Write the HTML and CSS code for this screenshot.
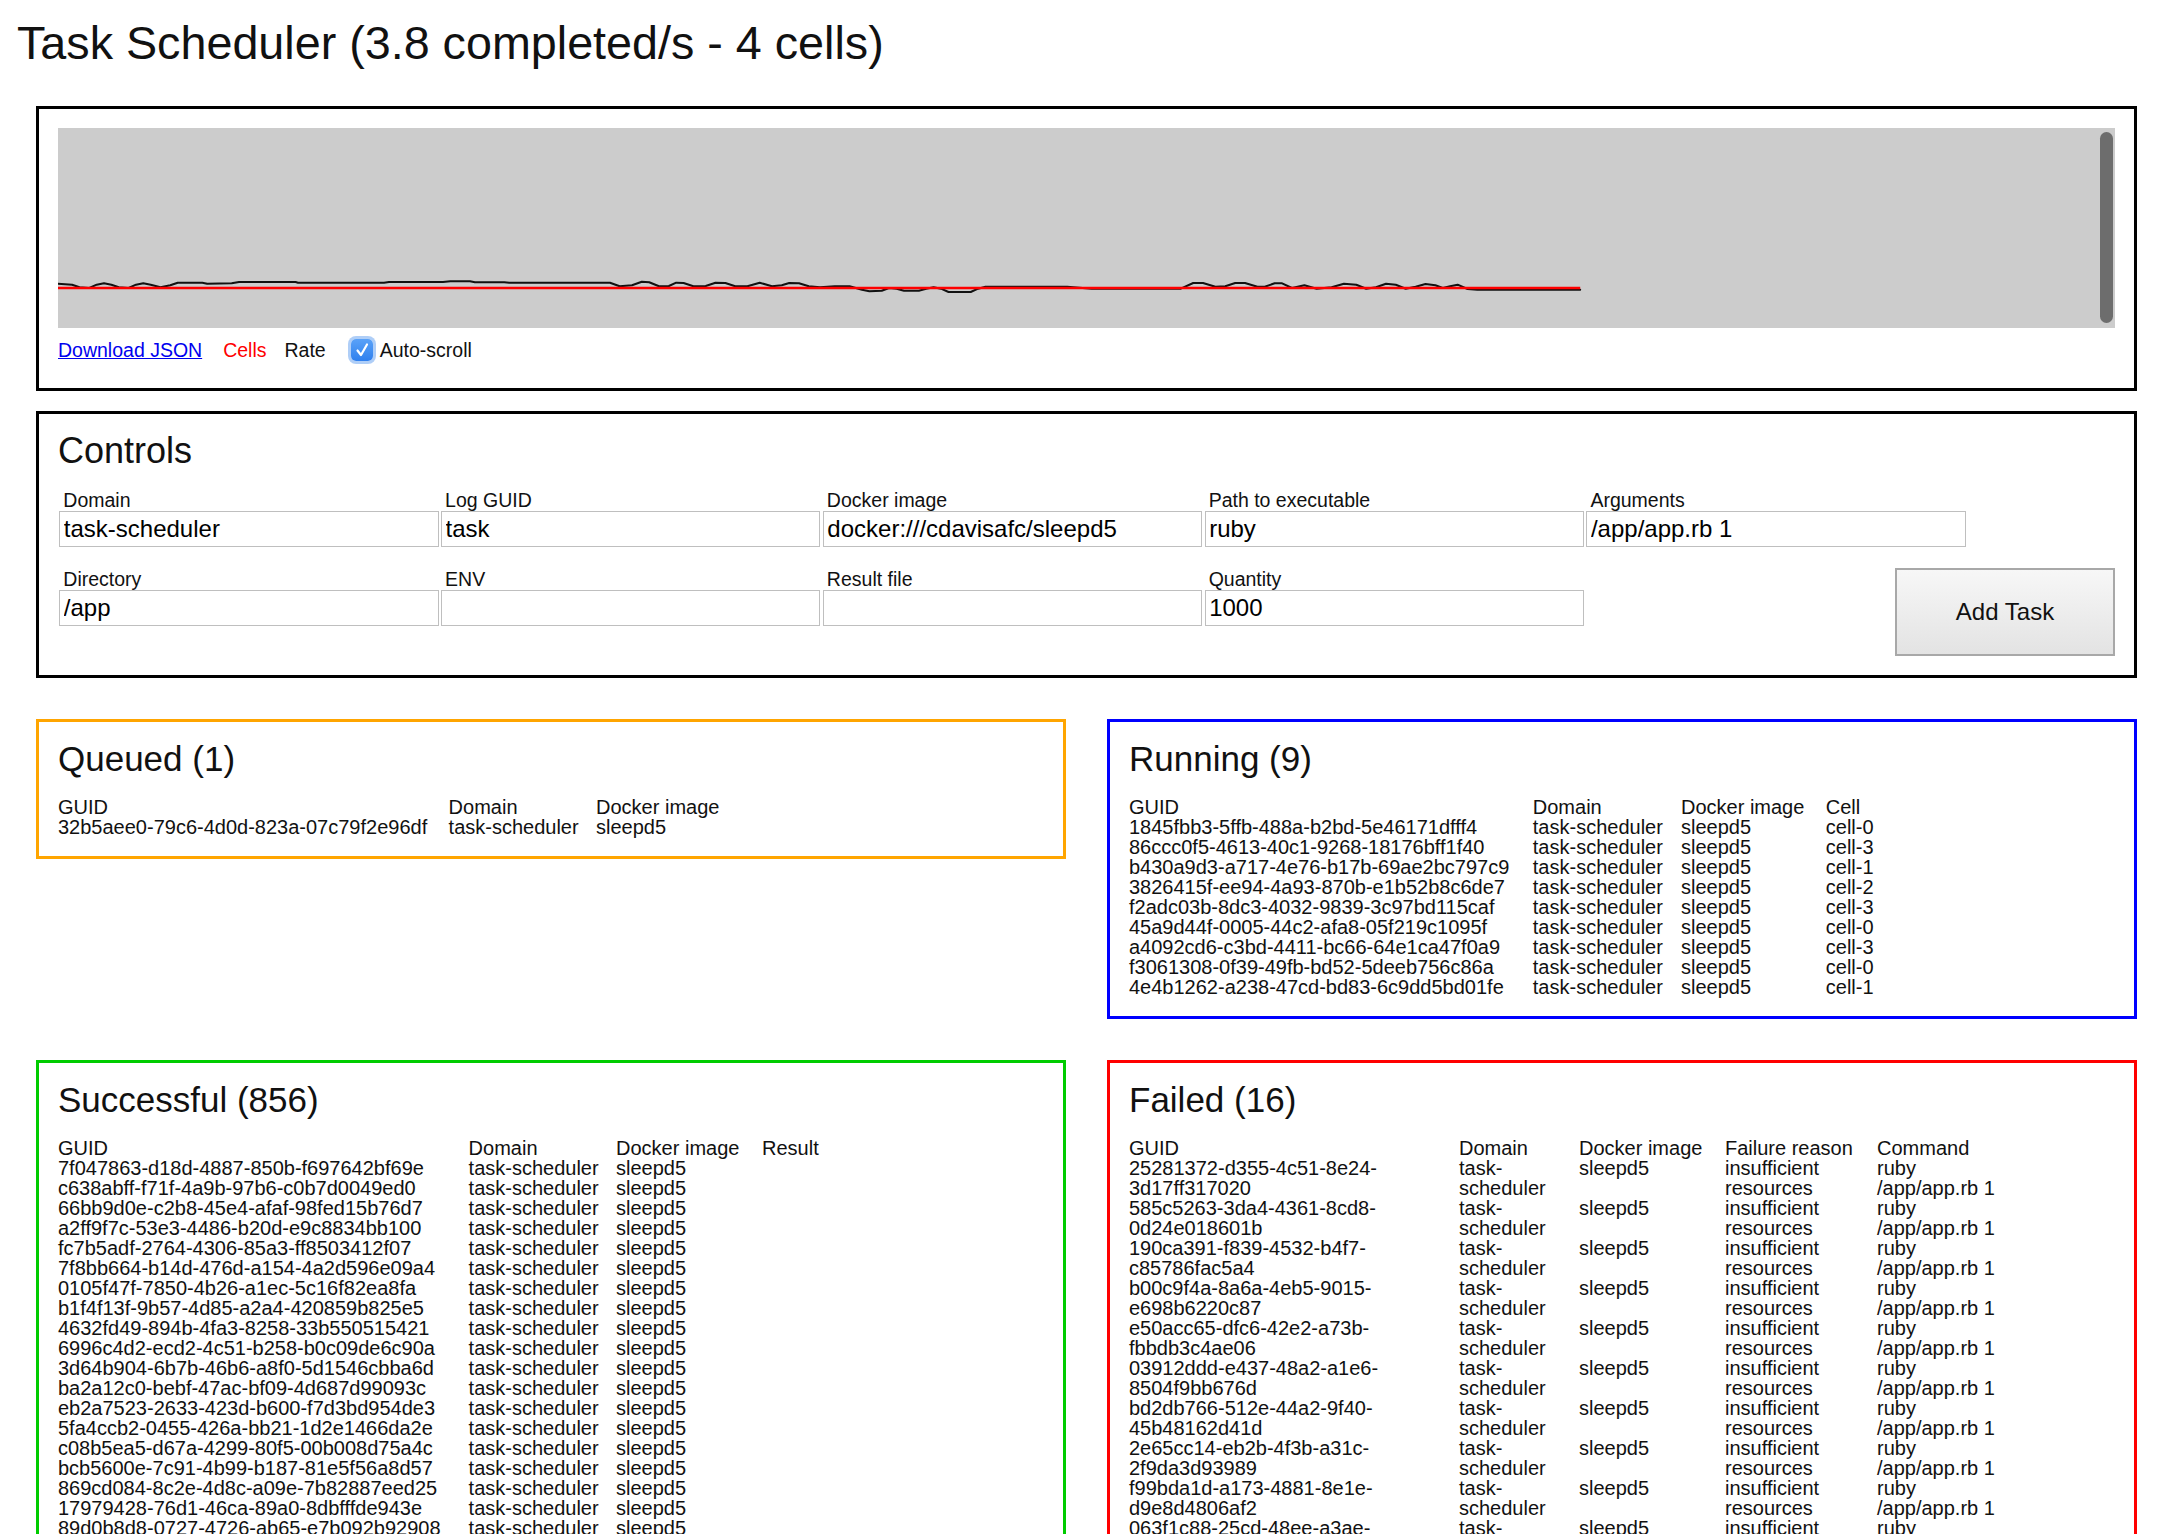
FILE: index.html
```html
<!DOCTYPE html>
<html lang="en">
<head>
<meta charset="utf-8">
<title>Task Scheduler</title>
<link rel="stylesheet" href="styles.css">
</head>
<body>
<h1 class="page-title">Task Scheduler (3.8 completed/s - 4 cells)</h1>
<main class="page">
  <section class="box box-chart">
    <div class="chart">
      <svg class="chart-svg" viewBox="58 128 2057 200" width="2057" height="200" aria-hidden="true">
        <path class="rate-line" d="M57.4,283.7 L72.1,284.7 L79.5,287.3 L89.3,288 L96.7,284.7 L104,283.3 L111.4,284.7 L118.8,287.3 L128.6,288 L136,284.7 L143.3,283.3 L150.7,284.7 L160.5,287.3 L170.3,285.3 L177.7,282.7 L202.3,282.7 L207.2,283.7 L231.7,283.3 L239,282 L295.6,282 L298,282.7 L384,282.7 L389,282 L443,282 L450.3,281.3 L470,281.3 L474.9,282.3 L504.3,282.3 L509.2,282.7 L610,282.7 L619.7,286.3 L632,285.3 L641.8,281.7 L649.2,282.3 L659,286.3 L668.9,286 L676.2,282.7 L683.6,283 L693.4,286.3 L705.7,286 L715.5,282.7 L725.4,283 L735.2,286.3 L747.4,286.3 L759.7,282.7 L772,286.3 L781.8,285.3 L789.2,283 L799,283.3 L808.8,286.3 L820,287.3 L834.8,286.3 L849.6,286.3 L862,289.7 L869.4,291.3 L881.7,290.7 L889.1,288 L896.6,288.7 L904,290.7 L918.8,290.7 L926.2,288.7 L933.6,287.3 L941,288.7 L948.5,292 L970.7,292 L978.1,288.7 L985.5,286.7 L1067.1,286.7 L1091.8,288.7 L1180.8,288.7 L1193.2,283 L1203,283 L1215.4,286.7 L1225.3,286.3 L1235.2,283 L1245,283 L1257.4,286.7 L1264.8,286.7 L1274.7,283.3 L1282.1,283.3 L1292,288 L1304.4,285.3 L1316.7,288.7 L1331.6,287.3 L1343.9,283.7 L1356.3,284.7 L1366.2,288.7 L1376,287.3 L1386,283.7 L1395.8,284.7 L1405.7,288.7 L1415.6,286.7 L1425.5,284 L1435.4,285.3 L1442.8,288 L1450.2,286.3 L1457.6,284.7 L1467.5,289 L1477.4,289.7 L1580.2,289.7"/>
        <path class="cells-line" d="M57.5,288 L1580.2,288"/>
      </svg>
      <div class="chart-thumb"></div>
    </div>
    <div class="legend">
      <a class="legend-link" href="#">Download JSON</a>
      <span class="legend-cells">Cells</span>
      <span class="legend-rate">Rate</span>
      <label class="autoscroll">
        <span class="checkbox"><svg viewBox="0 0 22 22" width="22" height="22" aria-hidden="true"><path d="M6.5 11.5 L10 16 L16 5.5" /></svg></span>
        <span>Auto-scroll</span>
      </label>
    </div>
  </section>

  <section class="box box-controls">
    <h2 class="box-title">Controls</h2>
    <div class="field-row">
      <div class="field"><label class="field-label">Domain</label><input class="field-input" type="text" value="task-scheduler"></div>
      <div class="field"><label class="field-label">Log GUID</label><input class="field-input" type="text" value="task"></div>
      <div class="field"><label class="field-label">Docker image</label><input class="field-input" type="text" value="docker:///cdavisafc/sleepd5"></div>
      <div class="field"><label class="field-label">Path to executable</label><input class="field-input" type="text" value="ruby"></div>
      <div class="field"><label class="field-label">Arguments</label><input class="field-input" type="text" value="/app/app.rb 1"></div>
    </div>
    <div class="field-row field-row-second">
      <div class="field"><label class="field-label">Directory</label><input class="field-input" type="text" value="/app"></div>
      <div class="field"><label class="field-label">ENV</label><input class="field-input" type="text" value=""></div>
      <div class="field"><label class="field-label">Result file</label><input class="field-input" type="text" value=""></div>
      <div class="field"><label class="field-label">Quantity</label><input class="field-input" type="text" value="1000"></div>
      <button class="add-task" type="button">Add Task</button>
    </div>
  </section>

  <div class="lists">
    <section class="box box-queued">
      <h2 class="box-title">Queued (1)</h2>
      <table class="task-table nowrap-table">
        <thead><tr><th class="q-guid">GUID</th><th class="q-domain">Domain</th><th>Docker image</th></tr></thead>
        <tbody>
          <tr><td>32b5aee0-79c6-4d0d-823a-07c79f2e96df</td><td>task-scheduler</td><td>sleepd5</td></tr>
        </tbody>
      </table>
    </section>

    <section class="box box-running">
      <h2 class="box-title">Running (9)</h2>
      <table class="task-table nowrap-table">
        <thead><tr><th class="r-guid">GUID</th><th class="r-domain">Domain</th><th class="r-docker">Docker image</th><th>Cell</th></tr></thead>
        <tbody>
          <tr><td>1845fbb3-5ffb-488a-b2bd-5e46171dfff4</td><td>task-scheduler</td><td>sleepd5</td><td>cell-0</td></tr>
          <tr><td>86ccc0f5-4613-40c1-9268-18176bff1f40</td><td>task-scheduler</td><td>sleepd5</td><td>cell-3</td></tr>
          <tr><td>b430a9d3-a717-4e76-b17b-69ae2bc797c9</td><td>task-scheduler</td><td>sleepd5</td><td>cell-1</td></tr>
          <tr><td>3826415f-ee94-4a93-870b-e1b52b8c6de7</td><td>task-scheduler</td><td>sleepd5</td><td>cell-2</td></tr>
          <tr><td>f2adc03b-8dc3-4032-9839-3c97bd115caf</td><td>task-scheduler</td><td>sleepd5</td><td>cell-3</td></tr>
          <tr><td>45a9d44f-0005-44c2-afa8-05f219c1095f</td><td>task-scheduler</td><td>sleepd5</td><td>cell-0</td></tr>
          <tr><td>a4092cd6-c3bd-4411-bc66-64e1ca47f0a9</td><td>task-scheduler</td><td>sleepd5</td><td>cell-3</td></tr>
          <tr><td>f3061308-0f39-49fb-bd52-5deeb756c86a</td><td>task-scheduler</td><td>sleepd5</td><td>cell-0</td></tr>
          <tr><td>4e4b1262-a238-47cd-bd83-6c9dd5bd01fe</td><td>task-scheduler</td><td>sleepd5</td><td>cell-1</td></tr>
        </tbody>
      </table>
    </section>

    <section class="box box-successful">
      <h2 class="box-title">Successful (856)</h2>
      <table class="task-table nowrap-table">
        <thead><tr><th class="s-guid">GUID</th><th class="s-domain">Domain</th><th class="s-docker">Docker image</th><th>Result</th></tr></thead>
        <tbody>
          <tr><td>7f047863-d18d-4887-850b-f697642bf69e</td><td>task-scheduler</td><td>sleepd5</td><td></td></tr>
          <tr><td>c638abff-f71f-4a9b-97b6-c0b7d0049ed0</td><td>task-scheduler</td><td>sleepd5</td><td></td></tr>
          <tr><td>66bb9d0e-c2b8-45e4-afaf-98fed15b76d7</td><td>task-scheduler</td><td>sleepd5</td><td></td></tr>
          <tr><td>a2ff9f7c-53e3-4486-b20d-e9c8834bb100</td><td>task-scheduler</td><td>sleepd5</td><td></td></tr>
          <tr><td>fc7b5adf-2764-4306-85a3-ff8503412f07</td><td>task-scheduler</td><td>sleepd5</td><td></td></tr>
          <tr><td>7f8bb664-b14d-476d-a154-4a2d596e09a4</td><td>task-scheduler</td><td>sleepd5</td><td></td></tr>
          <tr><td>0105f47f-7850-4b26-a1ec-5c16f82ea8fa</td><td>task-scheduler</td><td>sleepd5</td><td></td></tr>
          <tr><td>b1f4f13f-9b57-4d85-a2a4-420859b825e5</td><td>task-scheduler</td><td>sleepd5</td><td></td></tr>
          <tr><td>4632fd49-894b-4fa3-8258-33b550515421</td><td>task-scheduler</td><td>sleepd5</td><td></td></tr>
          <tr><td>6996c4d2-ecd2-4c51-b258-b0c09de6c90a</td><td>task-scheduler</td><td>sleepd5</td><td></td></tr>
          <tr><td>3d64b904-6b7b-46b6-a8f0-5d1546cbba6d</td><td>task-scheduler</td><td>sleepd5</td><td></td></tr>
          <tr><td>ba2a12c0-bebf-47ac-bf09-4d687d99093c</td><td>task-scheduler</td><td>sleepd5</td><td></td></tr>
          <tr><td>eb2a7523-2633-423d-b600-f7d3bd954de3</td><td>task-scheduler</td><td>sleepd5</td><td></td></tr>
          <tr><td>5fa4ccb2-0455-426a-bb21-1d2e1466da2e</td><td>task-scheduler</td><td>sleepd5</td><td></td></tr>
          <tr><td>c08b5ea5-d67a-4299-80f5-00b008d75a4c</td><td>task-scheduler</td><td>sleepd5</td><td></td></tr>
          <tr><td>bcb5600e-7c91-4b99-b187-81e5f56a8d57</td><td>task-scheduler</td><td>sleepd5</td><td></td></tr>
          <tr><td>869cd084-8c2e-4d8c-a09e-7b82887eed25</td><td>task-scheduler</td><td>sleepd5</td><td></td></tr>
          <tr><td>17979428-76d1-46ca-89a0-8dbfffde943e</td><td>task-scheduler</td><td>sleepd5</td><td></td></tr>
          <tr><td>89d0b8d8-0727-4726-ab65-e7b092b92908</td><td>task-scheduler</td><td>sleepd5</td><td></td></tr>
        </tbody>
      </table>
    </section>

    <section class="box box-failed">
      <h2 class="box-title">Failed (16)</h2>
      <table class="task-table failed-table">
        <thead><tr><th class="f-guid">GUID</th><th class="f-domain">Domain</th><th class="f-docker">Docker image</th><th class="f-reason">Failure reason</th><th class="f-cmd">Command</th></tr></thead>
        <tbody>
          <tr><td>25281372-d355-4c51-8e24-<wbr>3d17ff317020</td><td>task-scheduler</td><td>sleepd5</td><td>insufficient resources</td><td>ruby<br>/app/app.rb 1</td></tr>
          <tr><td>585c5263-3da4-4361-8cd8-<wbr>0d24e018601b</td><td>task-scheduler</td><td>sleepd5</td><td>insufficient resources</td><td>ruby<br>/app/app.rb 1</td></tr>
          <tr><td>190ca391-f839-4532-b4f7-<wbr>c85786fac5a4</td><td>task-scheduler</td><td>sleepd5</td><td>insufficient resources</td><td>ruby<br>/app/app.rb 1</td></tr>
          <tr><td>b00c9f4a-8a6a-4eb5-9015-<wbr>e698b6220c87</td><td>task-scheduler</td><td>sleepd5</td><td>insufficient resources</td><td>ruby<br>/app/app.rb 1</td></tr>
          <tr><td>e50acc65-dfc6-42e2-a73b-<wbr>fbbdb3c4ae06</td><td>task-scheduler</td><td>sleepd5</td><td>insufficient resources</td><td>ruby<br>/app/app.rb 1</td></tr>
          <tr><td>03912ddd-e437-48a2-a1e6-<wbr>8504f9bb676d</td><td>task-scheduler</td><td>sleepd5</td><td>insufficient resources</td><td>ruby<br>/app/app.rb 1</td></tr>
          <tr><td>bd2db766-512e-44a2-9f40-<wbr>45b48162d41d</td><td>task-scheduler</td><td>sleepd5</td><td>insufficient resources</td><td>ruby<br>/app/app.rb 1</td></tr>
          <tr><td>2e65cc14-eb2b-4f3b-a31c-<wbr>2f9da3d93989</td><td>task-scheduler</td><td>sleepd5</td><td>insufficient resources</td><td>ruby<br>/app/app.rb 1</td></tr>
          <tr><td>f99bda1d-a173-4881-8e1e-<wbr>d9e8d4806af2</td><td>task-scheduler</td><td>sleepd5</td><td>insufficient resources</td><td>ruby<br>/app/app.rb 1</td></tr>
          <tr><td>063f1c88-25cd-48ee-a3ae-<wbr>7d2f4b19c0e5</td><td>task-scheduler</td><td>sleepd5</td><td>insufficient resources</td><td>ruby<br>/app/app.rb 1</td></tr>
        </tbody>
      </table>
    </section>
  </div>
</main>
</body>
</html>
```

FILE: styles.css
```css
html {
  overflow: hidden;
  background: #fff;
}

body {
  margin: 0;
  font-family: "Liberation Sans", Arial, Helvetica, sans-serif;
  color: #111;
}

.page-title {
  margin: 0;
  padding: 17px 0 0 17px;
  font-size: 46.7px;
  line-height: 53px;
  font-weight: normal;
  color: #111;
}

.page {
  width: 2101px;
  margin: 36px 0 0 36px;
}

.box {
  border: 3px solid #000;
  padding: 19px;
  background: #fff;
}

.box-title {
  margin: 0 0 20px;
  font-size: 35px;
  line-height: 36px;
  font-weight: normal;
  color: #111;
}

/* ---------- chart ---------- */
.chart {
  position: relative;
  height: 200px;
  background: #cccccc;
  overflow: hidden;
}

.chart-svg {
  display: block;
}

.rate-line {
  fill: none;
  stroke: #111;
  stroke-width: 2;
  stroke-linejoin: round;
  stroke-linecap: round;
}

.cells-line {
  fill: none;
  stroke: #ff0000;
  stroke-width: 2.4;
}

.chart-thumb {
  position: absolute;
  top: 4px;
  bottom: 5px;
  right: 2.5px;
  width: 12.5px;
  border-radius: 7px;
  background: #6d6d6d;
}

.legend {
  box-sizing: border-box;
  height: 41px;
  padding-top: 3px;
  display: flex;
  align-items: center;
  font-size: 19.5px;
  line-height: 23px;
}

.legend-link {
  color: #0000ee;
  text-decoration: underline;
}

.legend-cells {
  margin-left: 21px;
  color: #ff0000;
}

.legend-rate {
  margin-left: 18px;
  color: #111;
}

.autoscroll {
  margin-left: 25px;
  display: flex;
  align-items: center;
  color: #111;
}

.checkbox {
  width: 22px;
  height: 22px;
  margin-right: 7px;
  border-radius: 5px;
  background: linear-gradient(#5aa2f8, #2f80ee);
  box-shadow: 0 0 0 3px rgba(110, 165, 240, 0.55);
  display: flex;
}

.checkbox svg path {
  fill: none;
  stroke: #fff;
  stroke-width: 2.2;
  stroke-linecap: round;
  stroke-linejoin: round;
}

/* ---------- controls ---------- */
.box-controls {
  margin-top: 20px;
}

.box-controls .box-title {
  font-size: 36px;
}

.field-row {
  display: flex;
  gap: 2.4px;
  padding-left: 1.3px;
  align-items: flex-start;
}

.field-row-second {
  margin-top: 21px;
}

.field {
  width: 379.4px;
  flex: none;
}

.field-label {
  display: block;
  padding-left: 4px;
  font-size: 19.5px;
  line-height: 22px;
  color: #111;
}

.field-input {
  display: block;
  box-sizing: border-box;
  width: 100%;
  height: 36px;
  margin: 0;
  padding: 0 3.5px;
  border: 1px solid #bfbfbf;
  border-radius: 0;
  background: #fff;
  font-family: "Liberation Sans", Arial, Helvetica, sans-serif;
  font-size: 24px;
  color: #000;
  outline: none;
}

.add-task {
  margin-left: auto;
  width: 220px;
  height: 88px;
  box-sizing: border-box;
  border: 2px solid #a8a8a8;
  border-radius: 0;
  background: linear-gradient(#f7f7f7, #e3e3e3);
  font-family: "Liberation Sans", Arial, Helvetica, sans-serif;
  font-size: 24px;
  color: #111;
  padding: 0;
}

/* ---------- task lists ---------- */
.lists {
  margin-top: 41px;
  display: grid;
  grid-template-columns: 1030px 1030px;
  column-gap: 41px;
  row-gap: 41px;
  align-items: start;
}

.box-queued { border-color: #ffa500; }
.box-running { border-color: #0000ff; }
.box-successful { border-color: #00cc00; }
.box-failed { border-color: #ff0000; }

.task-table {
  border-collapse: collapse;
  font-size: 20px;
  line-height: 20px;
  color: #111;
}

.task-table th,
.task-table td {
  padding: 0 21px 0 0;
  text-align: left;
  vertical-align: top;
  font-weight: normal;
}

.nowrap-table th,
.nowrap-table td {
  white-space: nowrap;
}

.nowrap-table th:nth-child(2),
.nowrap-table td:nth-child(2) {
  padding-right: 17.4px;
}

.q-guid { width: 369.6px; }
.q-domain { width: 130px; }

.r-guid { width: 382.8px; }
.r-domain { width: 130.8px; }
.r-docker { width: 123.8px; }

.s-guid { width: 389.6px; }
.s-domain { width: 130px; }
.s-docker { width: 125px; }

.failed-table {
  width: 100%;
  table-layout: fixed;
}

.f-guid { width: 309px; }
.f-domain { width: 99px; }
.f-docker { width: 125px; }
.f-reason { width: 131px; }
```
